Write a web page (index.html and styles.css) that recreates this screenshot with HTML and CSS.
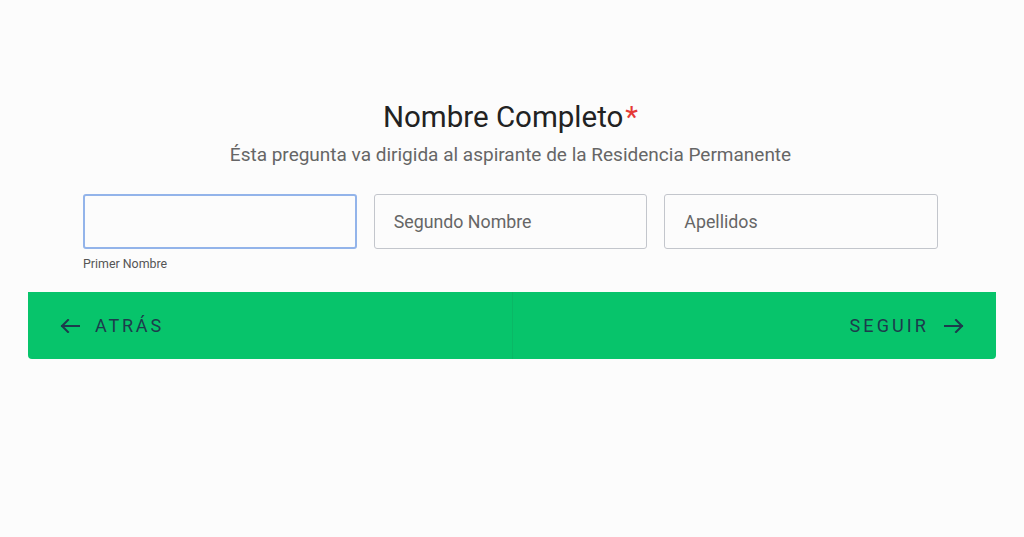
FILE: index.html
```html
<!DOCTYPE html>
<html lang="es">
<head>
<meta charset="utf-8">
<title>Nombre Completo</title>
<link rel="stylesheet" href="styles.css">
</head>
<body>
<main class="page">
  <section class="question">
    <h1 class="title">Nombre Completo<span class="req">*</span></h1>
    <p class="subtitle">Ésta pregunta va dirigida al aspirante de la Residencia Permanente</p>
    <div class="fields">
      <div class="field">
        <input class="input focused" type="text" aria-label="Primer Nombre">
        <label class="hint">Primer Nombre</label>
      </div>
      <div class="field">
        <input class="input" type="text" placeholder="Segundo Nombre">
      </div>
      <div class="field">
        <input class="input" type="text" placeholder="Apellidos">
      </div>
    </div>
  </section>
  <nav class="navbar">
    <button class="nav-btn back">
      <svg class="arrow" width="20" height="14" viewBox="0 0 20 14"><path d="M19 7H2M8 1L2 7l6 6" fill="none" stroke="currentColor" stroke-width="2" stroke-linecap="square"/></svg>
      <span>ATRÁS</span>
    </button>
    <button class="nav-btn next">
      <span>SEGUIR</span>
      <svg class="arrow" width="20" height="14" viewBox="0 0 20 14"><path d="M1 7h17M12 1l6 6-6 6" fill="none" stroke="currentColor" stroke-width="2" stroke-linecap="square"/></svg>
    </button>
  </nav>
</main>
</body>
</html>
```

FILE: styles.css
```css
* { box-sizing: border-box; }
html, body {
  margin: 0;
  padding: 0;
  background: #fcfcfc;
  font-family: Roboto, "Liberation Sans", Arial, sans-serif;
}
.page {
  width: 968px;
  margin-left: 28px;
  padding-top: 99px;
}
.question {
  width: 855px;
  margin-left: 55px;
  display: flex;
  flex-direction: column;
  align-items: center;
}
.title {
  margin: 0;
  font-size: 29.5px;
  font-weight: 400;
  color: #222;
  line-height: 36px;
}
.req {
  color: #e53935;
  margin-left: 2px;
}
.subtitle {
  margin: 9px 0 0;
  font-size: 19px;
  color: #666;
  line-height: 22px;
}
.fields {
  margin-top: 28px;
  width: 100%;
  display: flex;
  gap: 17px;
}
.field {
  flex: 1;
  display: flex;
  flex-direction: column;
}
.input {
  width: 100%;
  height: 55px;
  border: 1px solid #c3c6cc;
  border-radius: 3px;
  background: #fcfcfc;
  padding: 0 19px;
  font-family: inherit;
  font-size: 17.8px;
  color: #333;
  outline: none;
}
.input::placeholder { color: #666; }
.input.focused {
  border: 2px solid #93b4ea;
}
.hint {
  margin-top: 8px;
  font-size: 12.4px;
  color: #555;
  line-height: 14px;
}
.navbar {
  margin-top: 21px;
  height: 67px;
  background: #07c46b;
  border-radius: 0 0 4px 4px;
  display: flex;
}
.nav-btn {
  flex: 1;
  display: flex;
  align-items: center;
  gap: 15px;
  background: none;
  border: none;
  font-family: inherit;
  font-size: 18px;
  letter-spacing: 2.8px;
  color: #1d3b4c;
  cursor: pointer;
}
.back {
  justify-content: flex-start;
  padding-left: 32px;
  border-right: 1px solid #0ab866;
}
.next {
  justify-content: flex-end;
  padding-right: 32px;
  gap: 15px;
  letter-spacing: 3.1px;
}
.arrow { display: block; }
```
